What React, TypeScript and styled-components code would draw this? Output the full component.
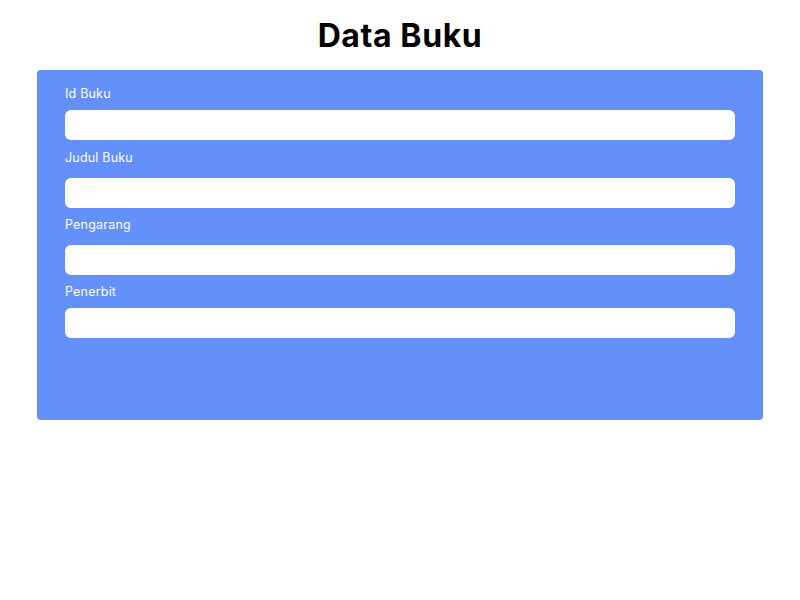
import styled, { createGlobalStyle } from "styled-components";

const GlobalStyle = createGlobalStyle`
  body {
    margin: 0;
    background: #ffffff;
    font-family: "Inter", "Noto Sans", sans-serif;
  }
`;

const Page = styled.div`
  display: flex;
  flex-direction: column;
  align-items: center;
  padding-top: 16px;
`;

const Title = styled.h1`
  margin: 0 0 14px;
  font-size: 32px;
  line-height: 40px;
  font-weight: 700;
  color: #000;
  letter-spacing: 0.6px;
`;

const Panel = styled.form`
  box-sizing: border-box;
  width: 726px;
  height: 350px;
  padding: 13px 28px 0;
  background: #6391f9;
  border-radius: 4px;
  display: flex;
  flex-direction: column;
`;

const Field = styled.div<{ $top: number }>`
  display: flex;
  flex-direction: column;
  margin-top: ${(p) => p.$top}px;
`;

const Label = styled.label<{ $gap: number }>`
  font-size: 12.5px;
  line-height: 20px;
  padding-top: 1px;
  letter-spacing: 0.2px;
  color: #ffffff;
  margin-bottom: ${(p) => p.$gap - 1}px;
`;

const Input = styled.input`
  box-sizing: border-box;
  height: 30px;
  width: 100%;
  border: none;
  border-radius: 6px;
  background: #ffffff;
  outline: none;
  padding: 0 10px;
  font-family: inherit;
`;

const fields = [
  { label: "Id Buku", top: 0, gap: 7 },
  { label: "Judul Buku", top: 7, gap: 11 },
  { label: "Pengarang", top: 6, gap: 11 },
  { label: "Penerbit", top: 6, gap: 7 },
];

export default function App() {
  return (
    <>
      <GlobalStyle />
      <Page>
        <Title>Data Buku</Title>
        <Panel>
          {fields.map((f) => (
            <Field key={f.label} $top={f.top}>
              <Label $gap={f.gap}>{f.label}</Label>
              <Input type="text" />
            </Field>
          ))}
        </Panel>
      </Page>
    </>
  );
}
